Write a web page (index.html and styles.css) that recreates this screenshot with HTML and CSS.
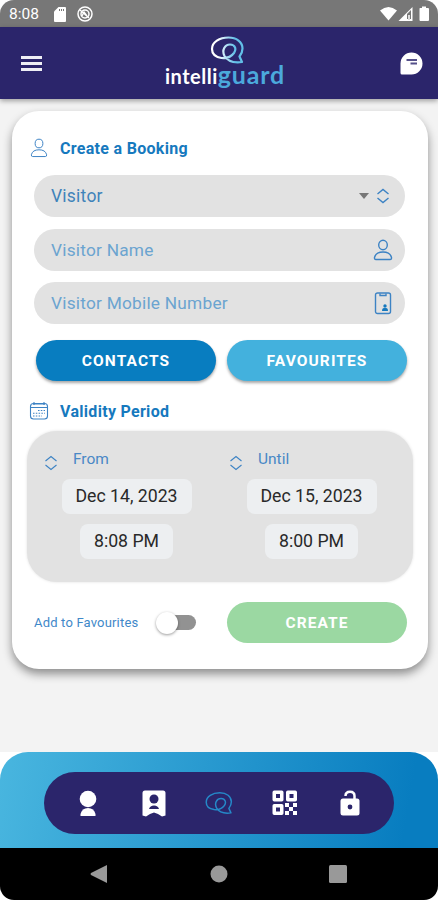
FILE: index.html
```
<!DOCTYPE html>
<html lang="en">
<head>
    <meta charset="UTF-8">
    <meta name="viewport" content="width=device-width, initial-scale=1.0">
    <title>Intelliguard - Create a Booking</title>
    <link rel="stylesheet" href="styles.css">
</head>
<body>
    <!-- shared icons -->
    <svg class="defs" width="0" height="0">
        <defs>
            <linearGradient id="logoFade" x1="0" x2="1" y1="0" y2="0">
                <stop offset="0.2" stop-color="#ffffff"/>
                <stop offset="0.75" stop-color="#62bfe8"/>
            </linearGradient>
        </defs>
        <symbol id="bubble" viewBox="0 0 34 28">
            <path stroke-linejoin="round" d="M31.500 26C24 27 17 25 14 20C11 14 14.500 8.500 19.500 8.500C25 8.500 26 13.500 23.500 17C20.500 21 16 22.500 11 22C5 21 1.500 18 1.500 13C1.500 6 9 1.500 18 1.500C26 1.500 32 6 32 12.500C32 16 31 18 29 20.500Z"/>
        </symbol>
        <symbol id="user" viewBox="0 0 20 22">
            <ellipse cx="10" cy="6" rx="4.300" ry="4.800"/>
            <path d="M1.500 18.500C2.500 14.500 5.500 13 10 13S17.500 14.500 18.500 18.500Q18.700 20.500 17 20.500H3Q1.300 20.500 1.500 18.500Z"/>
        </symbol>
        <symbol id="updown" viewBox="0 0 14 16">
            <path d="M1.500 6L7 1.500L12.500 6M1.500 10L7 14.500L12.500 10"/>
        </symbol>
    </svg>

    <div class="screen">
        <div class="status-bar">
            <span class="time">8:08</span>
            <svg class="sd" width="12" height="15" viewBox="0 0 12 15"><path fill="#fff" d="M4.500 0H11Q12 0 12 1V14Q12 15 11 15H1Q0 15 0 14V4.500Z"/><path stroke="#777" d="M5.500 2v2M7.500 2v2M9.500 2v2"/></svg>
            <svg class="sync" width="16" height="16" viewBox="0 0 16 16" fill="none" stroke="#fff"><circle cx="8" cy="8" r="7" stroke-width="1.500"/><circle cx="8" cy="8" r="4" stroke-width="1.500"/><path d="M3 4L12 12M5 10L7 6L10 10" stroke-width="1.300"/></svg>
            <svg class="signals" width="50" height="16" viewBox="0 0 50 16">
                <path fill="#fff" d="M0 4.500Q8.500 -2.500 17 4.500L8.500 14.500Z"/>
                <path fill="#fff" d="M18.500 15L32.500 1V15Z"/><path fill="#777" d="M27 8L31 4V13H27Z"/><path fill="#ddd" d="M28 9h2v5h-2z"/>
                <path fill="#fff" d="M40 2H42V0.500H46V2H48Q49 2 49 3V14Q49 15 48 15H40.500Q39.500 15 39.500 14V3Q39.500 2 40 2Z"/>
            </svg>
        </div>

        <header class="header">
            <button class="icon-button" aria-label="Menu"><span class="burger"></span></button>
            <div class="logo">
                <svg class="logo-mark" width="35" height="28"><use href="#bubble"/></svg>
                <div class="logo-text"><span class="intelli">intelli</span><span class="guard">guard</span></div>
            </div>
            <button class="icon-button" aria-label="Chat">
                <svg width="23" height="23" viewBox="0 0 23 23"><path fill="#fff" d="M11.500 0.500A11 11 0 0 1 11.500 22.500H2Q0.500 22.500 0.500 21V11.500A11 11 0 0 1 11.500 0.500Z"/><path stroke="#55508a" stroke-width="1.800" d="M6.500 8H17M10.500 11.500H17"/></svg>
            </button>
        </header>

        <main class="content">
            <form class="card">
                <h2 class="title">
                    <svg class="line-icon" width="18" height="20"><use href="#user"/></svg>
                    Create a Booking
                </h2>
                <div class="fields">
                    <div class="field filled">
                        <span>Visitor</span>
                        <i class="caret"></i>
                        <svg class="line-icon bold" width="14" height="16"><use href="#updown"/></svg>
                    </div>
                    <div class="field">
                        <span>Visitor Name</span>
                        <svg class="line-icon bold" width="20" height="22"><use href="#user"/></svg>
                    </div>
                    <div class="field">
                        <span>Visitor Mobile Number</span>
                        <svg class="line-icon bold phone" width="18" height="23" viewBox="0 0 18 23"><rect x="1.500" y="1" width="15" height="20.500" rx="2"/><path d="M6 1.500V3.500H12V1.500"/><path class="solid" d="M8 19Q8 16 10 16H12Q14 16 14 19Z"/><circle class="solid" cx="11" cy="14" r="1.700"/></svg>
                    </div>
                </div>
                <div class="buttons">
                    <button type="button" class="button contacts">CONTACTS</button>
                    <button type="button" class="button favourites">FAVOURITES</button>
                </div>

                <h2 class="title validity">
                    <svg class="line-icon" width="20" height="20" viewBox="0 0 20 20"><rect x="1.500" y="2.500" width="17" height="15.500" rx="3"/><path d="M2 6.500H18M5 1V4M15 1V4M4 3H16"/><path stroke-dasharray="1.500 1.300" d="M9 9.500H16M4 12.300H16M4 15H13"/></svg>
                    Validity Period
                </h2>
                <div class="period">
                    <div class="date-group">
                        <div class="date-label"><svg class="line-icon" width="14" height="16"><use href="#updown"/></svg>From</div>
                        <div class="chip">Dec 14, 2023</div>
                        <div class="chip time-chip">8:08 PM</div>
                    </div>
                    <div class="date-group">
                        <div class="date-label"><svg class="line-icon" width="14" height="16"><use href="#updown"/></svg>Until</div>
                        <div class="chip">Dec 15, 2023</div>
                        <div class="chip time-chip">8:00 PM</div>
                    </div>
                </div>

                <div class="actions">
                    <span class="add">Add to Favourites</span>
                    <span class="switch"><span class="knob"></span></span>
                    <button type="button" class="button create">CREATE</button>
                </div>
            </form>
        </main>

        <div class="bottom">
            <div class="tabs-wrap">
                <nav class="tabs">
                    <svg width="18" height="27" viewBox="0 0 18 27" fill="#fff"><circle cx="9" cy="9" r="8.300"/><path d="M1.500 26V24Q3 18 9 18T16.500 24V26Z"/></svg>
                    <svg width="24" height="27" viewBox="0 0 24 27"><path fill="#fff" d="M3 0.500H21Q23.500 0.500 23.500 3V25.500L20 26.500L16 24L12 22.500L8 24L4 26.500L0.500 25.500V3Q0.500 0.500 3 0.500Z"/><g fill="#2b256b"><circle cx="12" cy="9" r="4.500"/><path d="M7 19Q8 15.500 12 15.500T17 19Z"/></g></svg>
                    <svg class="tab-mark" width="28" height="24"><use href="#bubble"/></svg>
                    <svg width="26" height="26" viewBox="0 0 26 26"><g fill="none" stroke="#fff" stroke-width="3.500" stroke-linejoin="round"><rect x="2.250" y="2.250" width="7.500" height="7.500"/><rect x="15.750" y="2.250" width="7.500" height="7.500"/><rect x="2.250" y="15.750" width="7.500" height="7.500"/></g><path fill="#fff" d="M13 13h4v4h-4zM21 13h4v4h-4zM17 17h4v4h-4zM13 21h4v4h-4zM21 21h4v4h-4z"/></svg>
                    <svg width="20" height="26" viewBox="0 0 20 26"><path fill="none" stroke="#fff" stroke-width="2.500" d="M5.500 6Q5.500 1.700 10 1.700T14.500 6V10"/><rect x="0.500" y="8.500" width="19" height="17" rx="2.500" fill="#fff"/><circle cx="10" cy="17" r="2.400" fill="#2b256b"/></svg>
                </nav>
            </div>
        </div>

        <div class="android-nav">
            <svg width="18" height="20" viewBox="0 0 18 20"><path fill="#999" d="M1 9Q0 10 1 11L17 19V1Z"/></svg>
            <svg width="18" height="18" viewBox="0 0 18 18"><circle cx="9" cy="9" r="8.500" fill="#999"/></svg>
            <svg width="18" height="18" viewBox="0 0 18 18"><rect width="18" height="18" rx="1.500" fill="#999"/></svg>
        </div>
    </div>
</body>
</html>
```
FILE: styles.css
```
* {
    box-sizing: border-box;
}
body {
    margin: 0;
    background: #fff;
    font-family: Roboto, sans-serif;
}
button {
    padding: 0;
    border: 0;
    font-family: inherit;
}
svg {
    display: block;
    flex-shrink: 0;
}
.defs {
    position: absolute;
}
.screen {
    display: flex;
    flex-direction: column;
    width: 438px;
    height: 900px;
    overflow: hidden;
    border-radius: 14px;
    background: #f3f3f3;
}

/* status bar */
.status-bar {
    display: flex;
    align-items: center;
    height: 27px;
    padding: 1px 9px 0;
    background: #777;
    color: #fff;
}
.time {
    width: 45px;
    font-size: 15.5px;
}
.sync {
    margin-left: 11px;
}
.signals {
    margin-left: auto;
    margin-right: -1px;
}

/* header */
.header {
    position: relative;
    display: flex;
    flex-shrink: 0;
    justify-content: space-between;
    height: 72px;
    padding: 0 15px 0 21px;
    background: #2b256b;
    box-shadow: 0 2px 5px rgba(0,0,0,0.35);
}
.icon-button {
    display: flex;
    align-items: center;
    background: none;
}
.burger {
    width: 21px;
    height: 15px;
    border-top: 3px solid #eeeef5;
    border-bottom: 3px solid #eeeef5;
    background: linear-gradient(#eeeef5, #eeeef5) center / 100% 3px no-repeat;
}
.logo {
    display: flex;
    flex-direction: column;
    align-items: center;
    padding-top: 9px;
    margin-left: 8px;
}
.logo-mark {
    margin-left: 5px;
    fill: none;
    stroke: url(#logoFade);
    stroke-width: 2.2;
}
.logo-text {
    display: flex;
    align-items: baseline;
    margin-top: -4px;
    line-height: 28px;
    font-family: Lato, sans-serif;
    font-weight: bold;
}
.intelli {
    color: #fff;
    font-size: 20px;
    letter-spacing: 0.5px;
}
.guard {
    color: #4ba9dc;
    font-size: 25px;
    letter-spacing: 0.8px;
}

/* booking card */
.content {
    flex: 1;
    padding: 12px 10px 0 12px;
}
.card {
    height: 558px;
    padding: 26px 15px 0;
    border-radius: 27px;
    background: #fff;
    box-shadow: 0 5px 10px rgba(0,0,0,0.42);
}
.title {
    display: flex;
    align-items: center;
    gap: 12px;
    height: 22px;
    margin: 0;
    padding-left: 3px;
    color: #1679be;
    font-size: 16px;
    font-weight: bold;
    letter-spacing: 0.3px;
}
.line-icon {
    fill: none;
    stroke: #3d83c4;
    stroke-width: 1.1;
}
.line-icon.bold {
    stroke-width: 1.4;
}
.solid {
    fill: #1679be;
    stroke: none;
}
.fields {
    display: grid;
    gap: 11.5px;
    margin: 16px 8px 0 7px;
}
.field {
    display: flex;
    align-items: center;
    height: 42px;
    padding: 0 12px 0 17px;
    border-radius: 21px;
    background: #e2e2e2;
    color: #6ba4d0;
    font-size: 17.3px;
    letter-spacing: 0.23px;
}
.field span {
    flex: 1;
}
.field.filled {
    padding-right: 15px;
    color: #3f83ba;
    font-size: 17.5px;
}
.field .phone {
    margin-right: 1px;
}
.caret {
    margin-right: 7px;
    border: 5px solid transparent;
    border-top: 6px solid #777;
    border-bottom: 0;
}
.buttons {
    display: flex;
    justify-content: space-between;
    margin: 16px 6px 0 9px;
}
.button {
    width: 180px;
    height: 41px;
    border-radius: 21px;
    color: #fff;
    font-size: 15.5px;
    font-weight: bold;
    letter-spacing: 1.1px;
}
.contacts {
    background: #087dc0;
    box-shadow: 0 2px 3px rgba(0,0,0,0.35);
}
.favourites {
    background: #43b1dd;
    box-shadow: 0 2px 3px rgba(0,0,0,0.35);
}
.title.validity {
    gap: 11px;
    margin-top: 19px;
    padding-left: 2px;
}
.period {
    display: grid;
    grid-template-columns: 185px 185px;
    height: 151px;
    margin-top: 9px;
    padding: 18px 0 0 7px;
    border-radius: 30px;
    background: #e2e2e2;
    box-shadow: 0 0 3px rgba(0,0,0,0.13);
}
.date-group {
    display: flex;
    flex-direction: column;
    align-items: center;
}
.date-label {
    display: flex;
    align-self: stretch;
    gap: 15px;
    height: 30px;
    padding-left: 10px;
    color: #4988c6;
    font-size: 15.5px;
    line-height: 20px;
}
.date-label svg {
    margin-top: 6px;
}
.chip {
    width: 130px;
    height: 35px;
    border-radius: 8px;
    background: #edeff1;
    color: #292929;
    font-size: 17.7px;
    line-height: 34px;
    text-align: center;
}
.time-chip {
    width: 93px;
    margin-top: 10px;
}
.actions {
    display: flex;
    align-items: center;
    margin: 20px 6px 0 7px;
}
.add {
    width: 125px;
    color: #3f88c9;
    font-size: 13px;
    letter-spacing: 0.18px;
    white-space: nowrap;
}
.switch {
    position: relative;
    width: 37px;
    height: 15px;
    border-radius: 8px;
    background: #929292;
}
.knob {
    position: absolute;
    top: -3px;
    left: -3px;
    width: 22px;
    height: 22px;
    border-radius: 50%;
    background: #fff;
    box-shadow: 0 1px 3px rgba(0,0,0,0.4);
}
.create {
    margin-left: auto;
    background: #9bd8a2;
}

/* bottom tabs */
.bottom {
    background: #fff;
}
.tabs-wrap {
    height: 96px;
    padding: 20px 44px 14px;
    border-radius: 28px 28px 0 0;
    background: linear-gradient(100deg, #49b6df, #087dc0 92%);
}
.tabs {
    display: grid;
    grid-template-columns: repeat(5, 65.5px);
    align-items: center;
    justify-content: center;
    justify-items: center;
    height: 62px;
    border-radius: 31px;
    background: #2b256b;
}
.tab-mark {
    fill: none;
    stroke: #2588c8;
    stroke-width: 1.8;
}
.android-nav {
    display: flex;
    align-items: center;
    justify-content: space-between;
    height: 52px;
    padding: 0 91px 0 90px;
    background: #000;
}
```
